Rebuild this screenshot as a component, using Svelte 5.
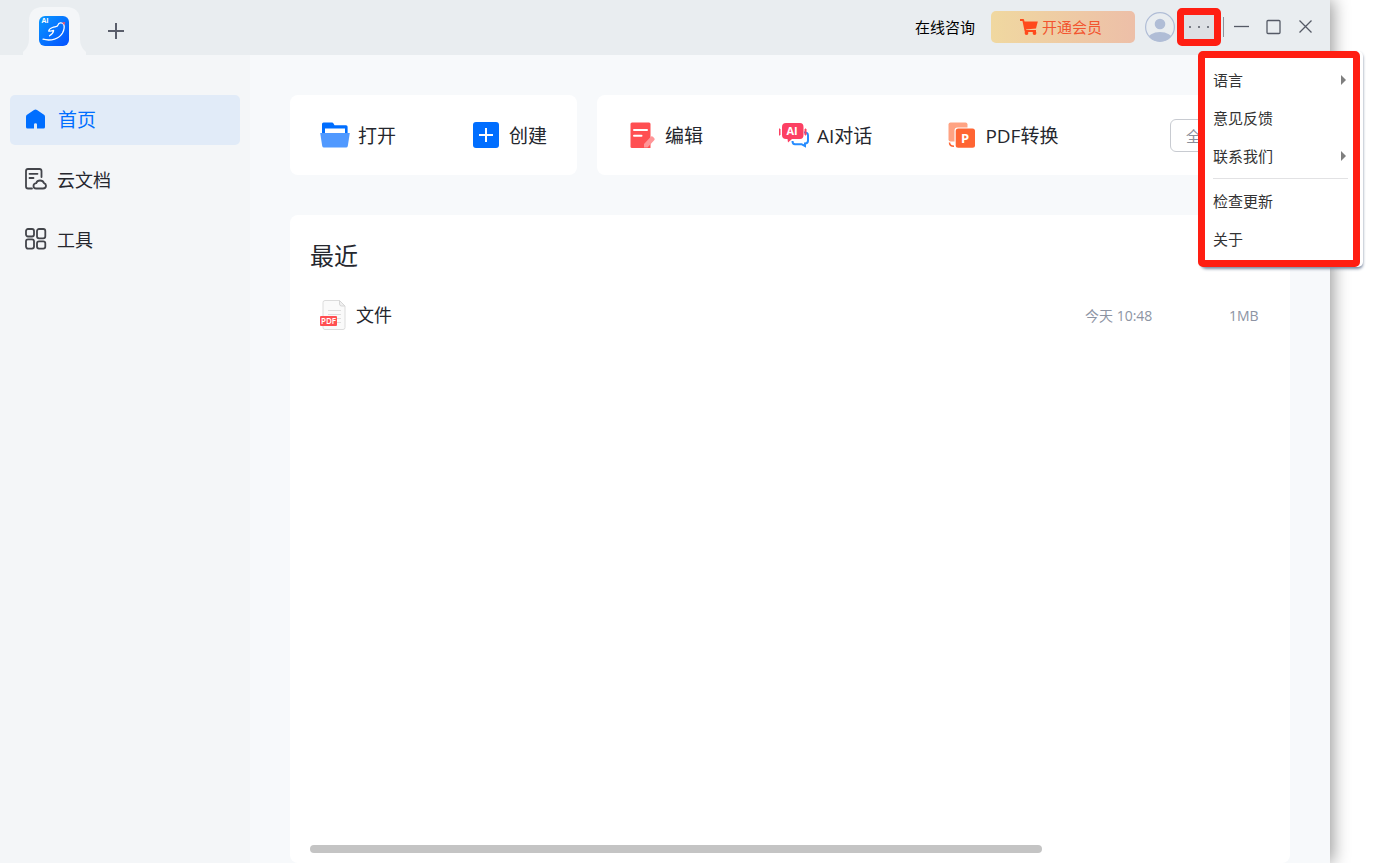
<script>
  const nav = [
    { id: 'home', label: '首页' },
    { id: 'cloud', label: '云文档' },
    { id: 'tools', label: '工具' }
  ];
  let current = $state('home');
  const files = [{ name: '文件', time: '今天 10:48', size: '1MB' }];
  const menuTop = [
    { label: '语言', sub: true },
    { label: '意见反馈', sub: false },
    { label: '联系我们', sub: true }
  ];
  const menuBottom = ['检查更新', '关于'];
  const thumb = 76.25;
</script>

<div class="desktop">
  <div class="window">
    <header>
      <div class="tabs">
        <button class="tab" aria-label="PDF">
          <svg class="tab-shape" width="63" height="48" viewBox="0 0 63 48" aria-hidden="true">
            <path d="M0 48V45Q6 40 6 32V14Q6 0 20 0H43Q57 0 57 14V32Q57 40 63 45V48Z" fill="#f4f6f8" />
          </svg>
          <svg class="logo" width="31" height="30" viewBox="0 0 31 30" aria-hidden="true">
            <defs>
              <linearGradient id="logo-fill" x1="0" y1="0" x2="1" y2="1">
                <stop offset="0" stop-color="#0a98ff" />
                <stop offset="1" stop-color="#0350ff" />
              </linearGradient>
            </defs>
            <rect width="30" height="30" rx="6" fill="url(#logo-fill)" />
            <path d="M4 23.200C12 25.500 20.500 22.500 23.500 17C25.300 13.500 25.600 10.500 24.700 8.200C22.800 6.200 19.800 6.500 18.900 9.100C18.500 11 16 10.500 13.500 11.500C11.200 12.400 9.900 13.800 9.700 15C11.300 15.300 13 15 14.600 14.400C14.500 17 12.500 18.500 10.500 19.800" fill="none" stroke="#fff" stroke-width="1.300" stroke-linecap="round" stroke-linejoin="round" />
            <path d="M23 6.500L26.200 6L25.300 9.200Z" fill="#f4516c" />
            <text x="2.500" y="6.800" font-size="7" font-weight="700" fill="#fff">AI</text>
          </svg>
        </button>
        <button class="add" aria-label="+">
          <svg width="16" height="16" viewBox="0 0 16 16"><path d="M8 0V16M0 8H16" stroke="#5a5e6b" stroke-width="2" /></svg>
        </button>
      </div>
      <div class="controls">
        <a class="consult" href="#consult">在线咨询</a>
        <button class="vip">
          <svg width="18" height="18" viewBox="0 0 18 18" aria-hidden="true">
            <g transform="translate(0 2)" fill="#ff4a1c">
              <path d="M0 1H3.200L5.500 12H16" fill="none" stroke="#ff4a1c" stroke-width="1.800" stroke-linejoin="round" />
              <path d="M3.500 2.500H17.800L16 9.500L5.500 10.500Z" />
              <circle cx="6.500" cy="14" r="1.900" /><circle cx="14.500" cy="14" r="1.900" />
            </g>
          </svg>
          开通会员
        </button>
        <button class="avatar" aria-label="账号">
          <svg width="30" height="30" viewBox="0 0 30 30">
            <defs><clipPath id="face"><circle cx="15" cy="15" r="14.500" /></clipPath></defs>
            <g clip-path="url(#face)" fill="#b0bdd6">
              <circle cx="15" cy="12" r="5.300" />
              <ellipse cx="15" cy="28" rx="12.500" ry="8" />
            </g>
            <circle cx="15" cy="15" r="14.400" fill="none" stroke="#b0bdd6" stroke-width="1.200" />
          </svg>
        </button>
        <div class="more-wrap">
          <button class="more" aria-label="···" aria-expanded="true">
            <svg width="22" height="2" viewBox="0 0 22 2"><path d="M1 0h2v2H1zM10 0h2v2h-2zM19 0h2v2h-2z" fill="#777b84" /></svg>
          </button>
          <div class="menu" role="menu">
            {#each menuTop as item}
              <button role="menuitem">
                {item.label}
                {#if item.sub}
                  <svg width="5" height="12" viewBox="0 0 5 12" aria-hidden="true"><path d="M0 2L5 7L0 12Z" fill="#7f7f7f" /></svg>
                {/if}
              </button>
            {/each}
            <hr />
            {#each menuBottom as label}
              <button role="menuitem">{label}</button>
            {/each}
          </div>
        </div>
        <span class="divider"></span>
        <button class="win" aria-label="最小化">
          <svg width="16" height="16" viewBox="0 0 16 16"><path d="M1 7.500H16" stroke="#555a66" stroke-width="1.300" /></svg>
        </button>
        <button class="win" aria-label="最大化">
          <svg width="16" height="16" viewBox="0 0 16 16"><rect x="2" y="1.500" width="13" height="13" rx="1" fill="none" stroke="#555a66" stroke-width="1.300" /></svg>
        </button>
        <button class="win" aria-label="关闭">
          <svg width="16" height="16" viewBox="0 0 16 16"><path d="M2.500 1.500L14.500 13.500M14.500 1.500L2.500 13.500" stroke="#555a66" stroke-width="1.300" /></svg>
        </button>
      </div>
    </header>

    <div class="body">
      <nav>
        {#each nav as item}
          <button class:active={current === item.id} onclick={() => (current = item.id)}>
            {#if item.id === 'home'}
              <svg width="24" height="24" viewBox="0 0 24 24" aria-hidden="true">
                <path d="M10 3Q11.500 2 13 3L20 7.800Q21 8.500 21 9.700V20Q21 21.500 19.500 21.500H13V17.500Q13 16.200 11.500 16.200Q10 16.200 10 17.500V21.500H3.500Q2 21.500 2 20V9.700Q2 8.500 3 7.800Z" fill="#006eff" />
              </svg>
            {:else if item.id === 'cloud'}
              <svg width="24" height="24" viewBox="0 0 24 24" fill="none" stroke="#43454b" stroke-width="1.800" stroke-linecap="round" stroke-linejoin="round" aria-hidden="true">
                <path d="M17.500 10V4Q17.500 2 15.500 2H4Q2 2 2 4V19.500Q2 21.500 4 21.500H8" />
                <path d="M5.500 6.800H13.500M5.500 11H9.500" />
                <path d="M12.200 21.500H19Q22 21.500 22 18.800Q22 16.800 20 16.200Q19 13.500 16 13.500Q13.100 13.500 12.200 16.200Q9.500 16.600 9.500 19Q9.500 21.500 12.200 21.500Z" />
              </svg>
            {:else}
              <svg width="24" height="24" viewBox="0 0 24 24" fill="none" stroke="#43454b" stroke-width="1.800" aria-hidden="true">
                <rect x="2" y="2" width="8" height="7.500" rx="2" /><rect x="13" y="2" width="8.300" height="9.300" rx="2" />
                <rect x="2" y="12.300" width="8" height="9.300" rx="2" /><rect x="13" y="14.300" width="8.300" height="7.300" rx="2" />
              </svg>
            {/if}
            {item.label}
          </button>
        {/each}
      </nav>

      <main>
        <div class="actions">
          <section class="card files">
            <button class="action">
              <svg width="30" height="26" viewBox="0 0 30 26" aria-hidden="true">
                <path d="M2 2Q2 .5 3.500 .5H12Q13 .5 13.500 1.500L14.500 3.200H26Q27.600 3.200 27.600 4.800V14H2Z" fill="#006eff" />
                <rect x="5" y="6.500" width="20" height="6" fill="#fff" />
                <path d="M.2 11H29.800L27.800 24Q27.500 25.500 26 25.500H4Q2.500 25.500 2.200 24Z" fill="#5099ff" />
              </svg>
              打开
            </button>
            <button class="action wide">
              <svg width="26" height="26" viewBox="0 0 26 26" aria-hidden="true">
                <rect width="26" height="26" rx="3" fill="#006eff" /><path d="M13 6V20M6 13H20" stroke="#fff" stroke-width="2" />
              </svg>
              创建
            </button>
          </section>
          <section class="card tools">
            <button class="action wide">
              <svg width="25" height="26" viewBox="0 0 25 26" aria-hidden="true">
                <path d="M2 .5H19Q20.500 .5 20.500 2V26H2Q.5 26 .5 24.500V2Q.5 .5 2 .5Z" fill="#ff4f52" />
                <path d="M4 8H17M4 13.800H11.500" stroke="#fff" stroke-width="2" stroke-linecap="round" />
                <path d="M14 25.500V22L21 14.500Q22 13.800 23 14.800L24.500 16.500Q25 17.500 24.200 18.300L17.500 25.500Z" fill="#ff9698" />
              </svg>
              编辑
            </button>
            <button class="action">
              <svg width="30" height="26" viewBox="0 0 30 26" aria-hidden="true">
                <path d="M25 10.500Q29 10 29 13.500V18.500Q29 21.500 26 21.500V24L22.500 22.200H16Q13.500 22.200 13.500 19" fill="none" stroke="#268cff" stroke-width="2" />
                <path d="M0 7H1V13H0ZM26 7H27V13H26Z" fill="#fc4063" stroke="#fc4063" />
                <path d="M7 1H21Q24.500 1 24.500 5V13Q24.500 17 21 17H13L9 20.500L8.500 17H7Q3 17 3 13V5Q3 1 7 1Z" fill="#fc4063" />
                <text x="7.500" y="13" font-size="11" font-weight="700" fill="#fff">AI</text>
              </svg>
              AI对话
            </button>
            <button class="action wide">
              <svg width="27" height="26" viewBox="0 0 27 26" aria-hidden="true">
                <rect x=".5" y=".5" width="19" height="19" rx="2" fill="#ffa383" />
                <path d="M1.500 20.500Q1.500 24.300 6 24.300" fill="none" stroke="#ff6533" stroke-width="1.500" />
                <rect x="6.500" y="5.500" width="21" height="21" rx="3" fill="#fff" />
                <rect x="7.700" y="6.500" width="19.300" height="19.300" rx="2.500" fill="#ff6533" />
                <text x="13" y="20.800" font-size="13" font-weight="700" fill="#fff">P</text>
              </svg>
              PDF转换
            </button>
            <button class="all">全部</button>
          </section>
        </div>

        <section class="card recent">
          <h1>最近</h1>
          <table>
            <tbody>
              {#each files as file}
                <tr>
                  <td class="name">
                    <div>
                      <svg width="26" height="30" viewBox="0 0 26 30" aria-hidden="true">
                        <path d="M5 .5H19.500L25 6V27.500Q25 29.500 23 29.500H5Q3 29.500 3 27.500V2.500Q3 .5 5 .5Z" fill="#fafafa" stroke="#dcdcdc" />
                        <path d="M19.500 .5V4Q19.500 6 21.500 6H25Z" fill="#f0f0f0" stroke="#d6d6d6" />
                        <path d="M8 10.500H21M8 14.500H21M17 18.500H21M17 22.500H21" stroke="#dedede" />
                        <rect y="16" width="17" height="10" rx="1" fill="#ff4f52" />
                        <text x="1" y="23.800" font-size="8" font-weight="600" fill="#fff">PDF</text>
                      </svg>
                      <span>{file.name}</span>
                    </div>
                  </td>
                  <td class="time">{file.time}</td>
                  <td class="size">{file.size}</td>
                </tr>
              {/each}
            </tbody>
          </table>
          <div class="scroll"><div class="thumb" style:width="{thumb}%"></div></div>
        </section>
      </main>
    </div>
  </div>
</div>

<style>
  :global(body) { background: #fff; }
  .desktop {
    box-sizing: border-box;
    min-height: 100vh;
    display: flex;
    padding-right: 43px;
    overflow: hidden;
    font-family: "Open Sans", "Noto Sans CJK SC", sans-serif;
    color: #25272e;
  }
  .desktop * { box-sizing: border-box; }
  button {
    font: inherit;
    color: inherit;
    border: 0;
    padding: 0;
    background: none;
    display: flex;
    align-items: center;
    white-space: nowrap;
    cursor: pointer;
  }
  svg { display: block; flex: none; }
  .window {
    flex: 1;
    min-width: 0;
    display: flex;
    flex-direction: column;
    background: #f7f9fb;
    box-shadow: 3px 0 16px rgba(0, 0, 0, 0.4);
  }
  header {
    height: 55px;
    display: flex;
    justify-content: space-between;
    background: #e9edf0;
  }
  .tabs { display: flex; align-items: flex-end; padding-left: 23px; }
  .tab { display: grid; place-items: center; }
  .tab > svg { grid-area: 1 / 1; }
  .add { height: 48px; margin-left: 22px; }
  .controls { display: flex; align-items: center; height: 54px; padding-right: 9px; font-size: 15px; }
  .consult { color: #000; text-decoration: none; margin-right: 16px; padding-bottom: 2px; }
  .vip {
    width: 144px;
    height: 32px;
    padding: 0 0 2px 29px;
    gap: 4px;
    border-radius: 5px;
    color: #f2552f;
    background: linear-gradient(90deg, #f0d8a0, #edbfa8);
  }
  .avatar { margin: 0 2px 0 10px; }
  .more-wrap { position: relative; }
  .more {
    width: 44px;
    height: 38px;
    justify-content: center;
    border: 7px solid #ff1e12;
    border-radius: 5px;
    background: #dde0e4;
  }
  .divider { width: 1px; height: 20px; margin: 0 1px 0 2px; background: #8d9199; }
  .win { width: 32px; height: 32px; justify-content: center; }
  .menu {
    position: absolute;
    z-index: 2;
    left: 21px;
    top: 43px;
    width: 162px;
    padding: 3px 0 2px;
    border: 7px solid #ff1e12;
    border-radius: 5px;
    background: #fff;
    box-shadow: 3px 0 0 #fff, 3px 2px 3px #7d8ba3;
    color: #333;
  }
  .menu button { width: 100%; height: 38px; justify-content: space-between; padding: 0 7px 2px 8px; }
  .menu hr { height: 1px; border: 0; margin: 3px 5px 3px 8px; background: #e2e2e4; }
  .body { flex: 1; display: flex; }
  nav {
    width: 250px;
    flex: none;
    display: flex;
    flex-direction: column;
    gap: 10px;
    padding: 40px 10px;
    background: #f4f6f8;
    font-size: 18px;
  }
  nav button { height: 50px; padding: 0 0 2px 14px; gap: 9px; border-radius: 5px; }
  nav button.active { background: #e1ebf8; color: #006eff; font-size: 19px; gap: 10px; }
  main { flex: 1; min-width: 0; display: flex; flex-direction: column; padding: 40px 40px 0; }
  .card { background: #fff; border-radius: 8px; }
  .actions { display: flex; gap: 20px; margin-bottom: 40px; font-size: 19px; }
  .actions .card { height: 80px; display: flex; align-items: center; gap: 77px; }
  .files { padding: 0 30px; }
  .tools { flex: 1; padding: 0 20px 0 33px; }
  .action { gap: 8px; }
  .action.wide { gap: 10px; }
  .tools .action + .action { margin-left: -1px; }
  .all {
    width: 100px;
    height: 33px;
    margin-left: auto;
    padding-left: 15px;
    border: 1px solid #c8cbd1;
    border-radius: 6px;
    font-size: 15px;
    color: #8a8e99;
  }
  .recent { flex: 1; display: flex; flex-direction: column; padding: 23px 20px 10px; }
  h1 { margin: 0 0 16px; font-size: 24px; line-height: 36px; font-weight: 400; }
  table { width: 100%; border-collapse: collapse; table-layout: fixed; }
  td { height: 50px; padding: 0; font-size: 14px; color: #8d94a3; white-space: nowrap; }
  .name div { display: flex; align-items: center; gap: 10px; padding-left: 10px; font-size: 18px; color: #25272e; }
  .name span { padding-bottom: 2px; }
  .time { width: 144px; }
  .size { width: 41px; }
  .scroll { margin-top: auto; }
  .thumb { height: 8px; border-radius: 4px; background: #c4c4c4; }
</style>
